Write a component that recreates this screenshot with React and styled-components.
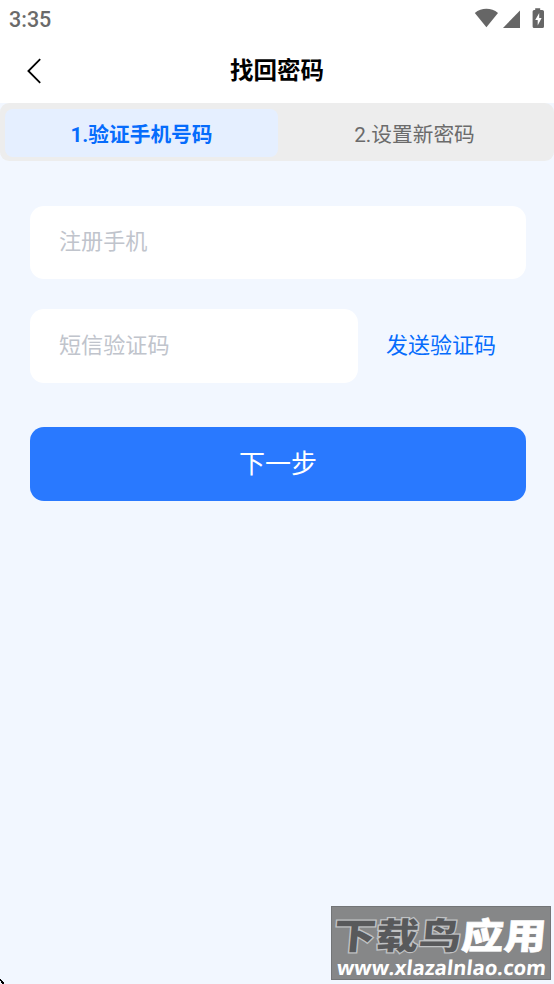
import React from "react";
import styled, { createGlobalStyle } from "styled-components";

export default function App() {
  return (
    <>
      <GlobalStyle />
      <Screen>
        <StatusBar>
          <Clock>3:35</Clock>
          <StatusIcons />
        </StatusBar>
        <Header>
          <BackButton aria-label="返回">
            <svg width="16" height="28" viewBox="0 0 16 28" fill="none">
              <path d="M14.2 2.2L2.4 14L14.2 25.8" stroke="#000" strokeWidth="1.8" />
            </svg>
          </BackButton>
          <Title>找回密码</Title>
        </Header>
        <Tabs>
          <Tab $active>1.验证手机号码</Tab>
          <Tab>2.设置新密码</Tab>
        </Tabs>
        <Form>
          <Input placeholder="注册手机" />
          <CodeRow>
            <Input placeholder="短信验证码" $height={74} />
            <SendButton type="button">发送验证码</SendButton>
          </CodeRow>
          <NextButton type="button">下一步</NextButton>
        </Form>
        <Watermark>
          <BrandName>
            <BrandDark>下载鸟</BrandDark>
            <BrandLight>应用</BrandLight>
          </BrandName>
          <BrandUrl>www.xlazalnlao.com</BrandUrl>
        </Watermark>
        <Corner width="5" height="5" viewBox="0 0 5 5">
          <path d="M0 0h1v1h1v1h1v1h1v2H2V4H1V2H0z" fill="#000" />
        </Corner>
      </Screen>
    </>
  );
}

function StatusIcons() {
  return (
    <svg width="72" height="22" viewBox="0 0 72 22" fill="#666">
      <path d="M0.8 5C7.5 -0.6 17.3 -0.6 24 5L12.4 19.2Z" />
      <path d="M29 20L46 2.5V20Z" />
      <path
        fillRule="evenodd"
        d="M61.2 0.2H66.2V2H68.2Q70 2 70 3.6V18.4Q70 20 68.4 20H60.2Q58.6 20 58.6 18.4V3.6Q58.6 2 60.2 2H61.2ZM65.2 5L61.2 11.9H63.7V17.4L67.6 10.1H65.2Z"
      />
    </svg>
  );
}

const GlobalStyle = createGlobalStyle`
  * {
    box-sizing: border-box;
  }

  body {
    margin: 0;
    font-family: Roboto, "Noto Sans CJK SC", sans-serif;
  }

  button, input {
    border: 0;
    padding: 0;
    font-family: inherit;
  }
`;

const Screen = styled.div`
  position: relative;
  height: 984px;
  overflow: hidden;
  background: #f2f7ff;
`;

const StatusBar = styled.div`
  display: flex;
  justify-content: space-between;
  height: 38px;
  padding: 8px 8px 0 9px;
  background: white;
`;

const Clock = styled.span`
  color: #6a6a6a;
  font-size: 21.5px;
  font-weight: 500;
  line-height: 23px;
`;

const Header = styled.header`
  display: grid;
  grid-template-columns: 60px 1fr 60px;
  align-items: center;
  height: 65px;
  background: white;
`;

const BackButton = styled.button`
  display: flex;
  padding: 0 0 0 26px;
  background: none;
`;

const Title = styled.h1`
  margin: 0;
  color: black;
  font-size: 23.5px;
  font-weight: 700;
  line-height: 36px;
  text-align: center;
`;

const Tabs = styled.nav`
  display: flex;
  height: 58px;
  padding: 6px 3px 4px 5px;
  border-radius: 9px;
  background: #ededed;
`;

const Tab = styled.div`
  flex: 1;
  border-radius: 8px;
  background: ${({ $active }) => ($active ? "#e5efff" : "transparent")};
  color: ${({ $active }) => ($active ? "#066cfc" : "#6b6b6b")};
  font-size: 20.7px;
  font-weight: ${({ $active }) => ($active ? 700 : 400)};
  line-height: 53px;
  text-align: center;
`;

const Form = styled.form`
  display: flex;
  flex-direction: column;
  padding: 45px 28px 0 30px;
`;

const Input = styled.input`
  width: 100%;
  height: ${({ $height }) => $height || 73}px;
  padding: 0 29px 3px;
  border-radius: 14px;
  background: white;
  font-size: 22.1px;

  &::placeholder {
    color: #c0c4cc;
  }
`;

const CodeRow = styled.div`
  display: grid;
  grid-template-columns: 328px 1fr;
  margin: 30px 0 44px;
`;

const SendButton = styled.button`
  padding: 0 2px 6px 0;
  background: none;
  color: #066cfc;
  font-size: 22px;
`;

const NextButton = styled.button`
  height: 74px;
  padding: 0 0 5px 0;
  border-radius: 14px;
  background: #2979ff;
  color: white;
  font-size: 26px;
`;

const Watermark = styled.aside`
  position: absolute;
  right: 3px;
  bottom: 4px;
  width: 220px;
  height: 74px;
  border: 1px solid #737577;
  background: #868788;
  white-space: nowrap;
`;

const BrandName = styled.div`
  display: flex;
  height: 47px;
  padding-left: 2px;
  font-family: "Noto Sans CJK SC", sans-serif;
  font-size: 36px;
  font-weight: 900;
  line-height: 53px;
  letter-spacing: 0.4px;
  transform: skewX(-5deg) scaleX(1.17);
  transform-origin: 0 50%;
`;

const BrandDark = styled.span`
  color: #58595b;
  -webkit-text-stroke: 2.5px #c0c2c4;
  paint-order: stroke fill;
`;

const BrandLight = styled.span`
  color: white;
  -webkit-text-stroke: 0.6px white;
`;

const BrandUrl = styled.div`
  padding-left: 5px;
  color: white;
  font-family: "Open Sans", sans-serif;
  font-size: 20.3px;
  font-weight: 700;
  line-height: 26px;
  transform: skewX(-6deg);
`;

const Corner = styled.svg`
  position: absolute;
  left: 0;
  bottom: 0;
`;
